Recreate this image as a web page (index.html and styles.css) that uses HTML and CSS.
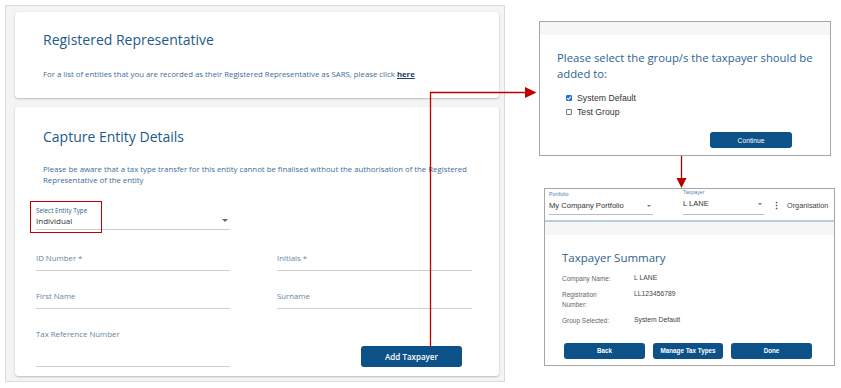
FILE: index.html
```html
<!DOCTYPE html>
<html lang="en">
<head>
<meta charset="utf-8">
<title>Add Taxpayer flow</title>
<link rel="stylesheet" href="styles.css">
</head>
<body>
<div class="canvas">
  <div class="left-frame">
    <section class="card card-rep">
      <h2 class="card-title">Registered Representative</h2>
      <p class="card-text">For a list of entities that you are recorded as their Registered Representative as SARS, please click <a class="link" href="#">here</a></p>
    </section>
    <section class="card card-capture">
      <h2 class="card-title indent">Capture Entity Details</h2>
      <p class="card-text indent para">Please be aware that a tax type transfer for this entity cannot be finalised without the authorisation of the Registered Representative of the entity</p>
      <div class="select-field">
        <div class="select-label">Select Entity Type</div>
        <div class="select-value"><span>Individual</span><span class="caret"></span></div>
      </div>
      <div class="form-grid">
        <div class="field">ID Number *</div>
        <div class="field">Initials *</div>
        <div class="field">First Name</div>
        <div class="field">Surname</div>
        <div class="field">Tax Reference Number</div>
        <div class="btn-cell"><button class="btn btn-add">Add Taxpayer</button></div>
      </div>
    </section>
  </div>

  <div class="right-col">
    <div class="dialog">
      <div class="band"></div>
      <h3 class="dialog-title">Please select the group/s the taxpayer should be added to:</h3>
      <ul class="group-list">
        <li class="group-item"><span class="checkbox checked"><svg viewBox="0 0 6 6" width="6" height="6"><path d="M1.1 3.1 L2.5 4.4 L4.9 1.6" fill="none" stroke="#fff" stroke-width="1.1"/></svg></span>System Default</li>
        <li class="group-item"><span class="checkbox"></span>Test Group</li>
      </ul>
      <div class="dialog-actions"><button class="btn btn-continue">Continue</button></div>
    </div>

    <div class="summary">
      <div class="summary-header">
        <div class="picker picker-portfolio">
          <div class="picker-label">Portfolio</div>
          <div class="picker-value"><span>My Company Portfolio</span><span class="caret small"></span></div>
        </div>
        <div class="picker picker-taxpayer">
          <div class="picker-label">Taxpayer</div>
          <div class="picker-value"><span>L LANE</span><span class="caret small"></span></div>
        </div>
        <div class="kebab">&#8942;</div>
        <div class="org">Organisation</div>
      </div>
      <div class="band"></div>
      <div class="summary-body">
        <h3 class="summary-title">Taxpayer Summary</h3>
        <dl class="summary-list">
          <dt>Company Name:</dt><dd>L LANE</dd>
          <dt>Registration Number:</dt><dd>LL123456789</dd>
          <dt>Group Selected:</dt><dd>System Default</dd>
        </dl>
        <div class="summary-actions">
          <button class="btn btn-sm btn-wide">Back</button>
          <button class="btn btn-sm btn-mid">Manage Tax Types</button>
          <button class="btn btn-sm btn-wide">Done</button>
        </div>
      </div>
    </div>
  </div>

  <svg class="arrows" width="841" height="388" viewBox="0 0 841 388">
    <polyline points="430.5,347 430.5,92.5 526,92.5" fill="none" stroke="#c00000" stroke-width="1.3"/>
    <polygon points="525,87 536.5,92.5 525,98" fill="#c00000"/>
    <line x1="681.5" y1="156" x2="681.5" y2="179" stroke="#b00000" stroke-width="1.3"/>
    <polygon points="676.5,178 686.5,178 681.5,188" fill="#b00000"/>
  </svg>
</div>
</body>
</html>
```

FILE: styles.css
```css
* { box-sizing: border-box; margin: 0; padding: 0; }

body {
  margin: 0;
  background: #ffffff;
  font-family: "Open Sans", "Liberation Sans", sans-serif;
}

.canvas {
  position: relative;
  width: 841px;
  height: 388px;
  display: flex;
  align-items: flex-start;
  overflow: hidden;
}

/* ---------- left panel ---------- */
.left-frame {
  margin: 5px 0 0 5px;
  width: 500px;
  height: 377px;
  border: 1px solid #dadada;
  background: #f4f4f4;
  padding: 6px 5px 5px 9px;
  display: flex;
  flex-direction: column;
  gap: 9px;
}

.card {
  background: #ffffff;
  border-radius: 3px;
  box-shadow: 0 1px 2px rgba(0, 0, 0, 0.22), 0 0 1px rgba(0, 0, 0, 0.12);
}

.card-rep {
  height: 86px;
  padding: 18px 20px 0 28px;
}

.card-capture {
  height: 269px;
  padding: 20px 20px 0 21px;
}

.indent { margin-left: 7px; }

.card-title {
  font-size: 14px;
  line-height: 20px;
  font-weight: 400;
  color: #22598a;
}

.card-text {
  margin-top: 18.5px;
  font-size: 7.8px;
  line-height: 11px;
  color: #3d6d96;
}

.card-text.para {
  margin-top: 17px;
  margin-right: 6px;
}

.link {
  color: #1d3f66;
  font-weight: 700;
  text-decoration: underline;
}

.select-field {
  position: relative;
  width: 194px;
  margin-top: 20px;
  padding-bottom: 3px;
  border-bottom: 1px solid #cfcfcf;
}

.select-field::after {
  content: "";
  position: absolute;
  left: -6px;
  top: -5px;
  width: 70px;
  height: 30px;
  border: 1px solid #c00000;
}

.select-label {
  font-size: 6.3px;
  line-height: 9px;
  color: #2d5f8c;
}

.select-value {
  display: flex;
  justify-content: space-between;
  align-items: center;
  font-size: 8px;
  line-height: 11px;
  color: #333333;
}

.caret {
  width: 0;
  height: 0;
  border-left: 3px solid transparent;
  border-right: 3px solid transparent;
  border-top: 3px solid #666666;
  margin-right: 2px;
}

.caret.small {
  border-left-width: 2.5px;
  border-right-width: 2.5px;
  border-top-width: 2.5px;
  border-top-color: #777777;
}

.form-grid {
  margin-top: 23px;
  display: grid;
  grid-template-columns: 194px 195px;
  column-gap: 47px;
  row-gap: 20px;
}

.field {
  font-size: 7.8px;
  line-height: 11px;
  padding-bottom: 6px;
  border-bottom: 1px solid #cfcfcf;
  color: #6a849c;
}

.btn-cell {
  display: flex;
  justify-content: flex-end;
  padding-right: 10px;
  padding-top: 17px;
}

.btn {
  border: none;
  background: #0c5188;
  color: #ffffff;
  border-radius: 3px;
  font-family: "Open Sans", sans-serif;
  cursor: pointer;
}

.btn-add {
  width: 101px;
  height: 21px;
  font-size: 8px;
  font-weight: 600;
}

/* ---------- right column ---------- */
.right-col {
  margin-left: 34px;
  display: flex;
  flex-direction: column;
  align-items: flex-start;
}

.band {
  height: 13px;
  background: #f6f6f6;
}

.dialog {
  margin-top: 21px;
  width: 292px;
  height: 135px;
  border: 1px solid #a6a6a6;
  background: #ffffff;
}

.dialog-title {
  margin: 15px 0 0 17px;
  font-size: 11.3px;
  line-height: 15.5px;
  font-weight: 400;
  color: #2b6396;
}

.group-list {
  list-style: none;
  margin: 10px 0 0 26px;
  font-family: "Liberation Sans", sans-serif;
  font-size: 8.7px;
  line-height: 14px;
  color: #333333;
}

.group-item {
  display: flex;
  align-items: center;
  gap: 5px;
}

.checkbox {
  width: 6px;
  height: 6px;
  border: 1px solid #767676;
  border-radius: 1px;
  background: #ffffff;
  display: flex;
  align-items: center;
  justify-content: center;
}

.checkbox.checked {
  background: #1e6fd9;
  border-color: #1e6fd9;
}

.checkbox svg { display: block; flex: none; }

.dialog-actions {
  margin-top: 13px;
  display: flex;
  justify-content: flex-end;
  padding-right: 38px;
}

.btn-continue {
  width: 82px;
  height: 16px;
  font-family: "Liberation Sans", sans-serif;
  font-size: 6.7px;
}

.summary {
  margin: 32px 0 0 5px;
  width: 291px;
  height: 178px;
  border: 1px solid #a6a6a6;
  background: #ffffff;
  font-family: "Liberation Sans", sans-serif;
}

.summary-header {
  height: 33px;
  border-bottom: 2px solid #b7cde0;
  display: flex;
  align-items: flex-start;
  padding-left: 4px;
}

.picker { display: flex; flex-direction: column; }

.picker-portfolio { width: 104px; margin-top: 2px; }

.picker-taxpayer { width: 81px; margin-left: 30px; }

.picker-label {
  font-size: 5.3px;
  line-height: 7px;
  color: #4f7fb5;
}

.picker-value {
  margin-top: 2px;
  display: flex;
  justify-content: space-between;
  align-items: center;
  font-size: 7.6px;
  line-height: 12px;
  color: #333333;
  border-bottom: 1px solid #bdbdbd;
  padding-bottom: 2px;
}

.picker-taxpayer .picker-value { padding-bottom: 4px; }

.kebab {
  margin: 11px 0 0 8px;
  font-size: 9px;
  line-height: 12px;
  color: #444444;
  font-weight: 700;
}

.org {
  margin: 11px 0 0 6px;
  font-size: 7.3px;
  line-height: 12px;
  color: #444444;
}

.summary-body { padding: 15px 0 0 17px; }

.summary-title {
  font-family: "Open Sans", sans-serif;
  font-size: 11.5px;
  line-height: 15px;
  font-weight: 400;
  color: #2b5f8c;
}

.summary-list {
  margin-top: 9px;
  display: grid;
  grid-template-columns: 72px auto;
  row-gap: 6px;
  font-size: 6.5px;
  line-height: 10px;
}

.summary-list dt {
  width: 55px;
  color: #666666;
}

.summary-list dd {
  color: #444444;
  font-size: 6.8px;
  margin-top: -1px;
}

.summary-actions {
  margin-top: 16.5px;
  padding-left: 2px;
  display: flex;
  gap: 8px;
}

.btn-sm {
  height: 16px;
  font-family: "Liberation Sans", sans-serif;
  font-size: 6.3px;
  font-weight: 700;
}

.btn-wide { width: 81px; }
.btn-mid { width: 70px; }

.arrows {
  position: absolute;
  left: 0;
  top: 0;
  pointer-events: none;
}
```
